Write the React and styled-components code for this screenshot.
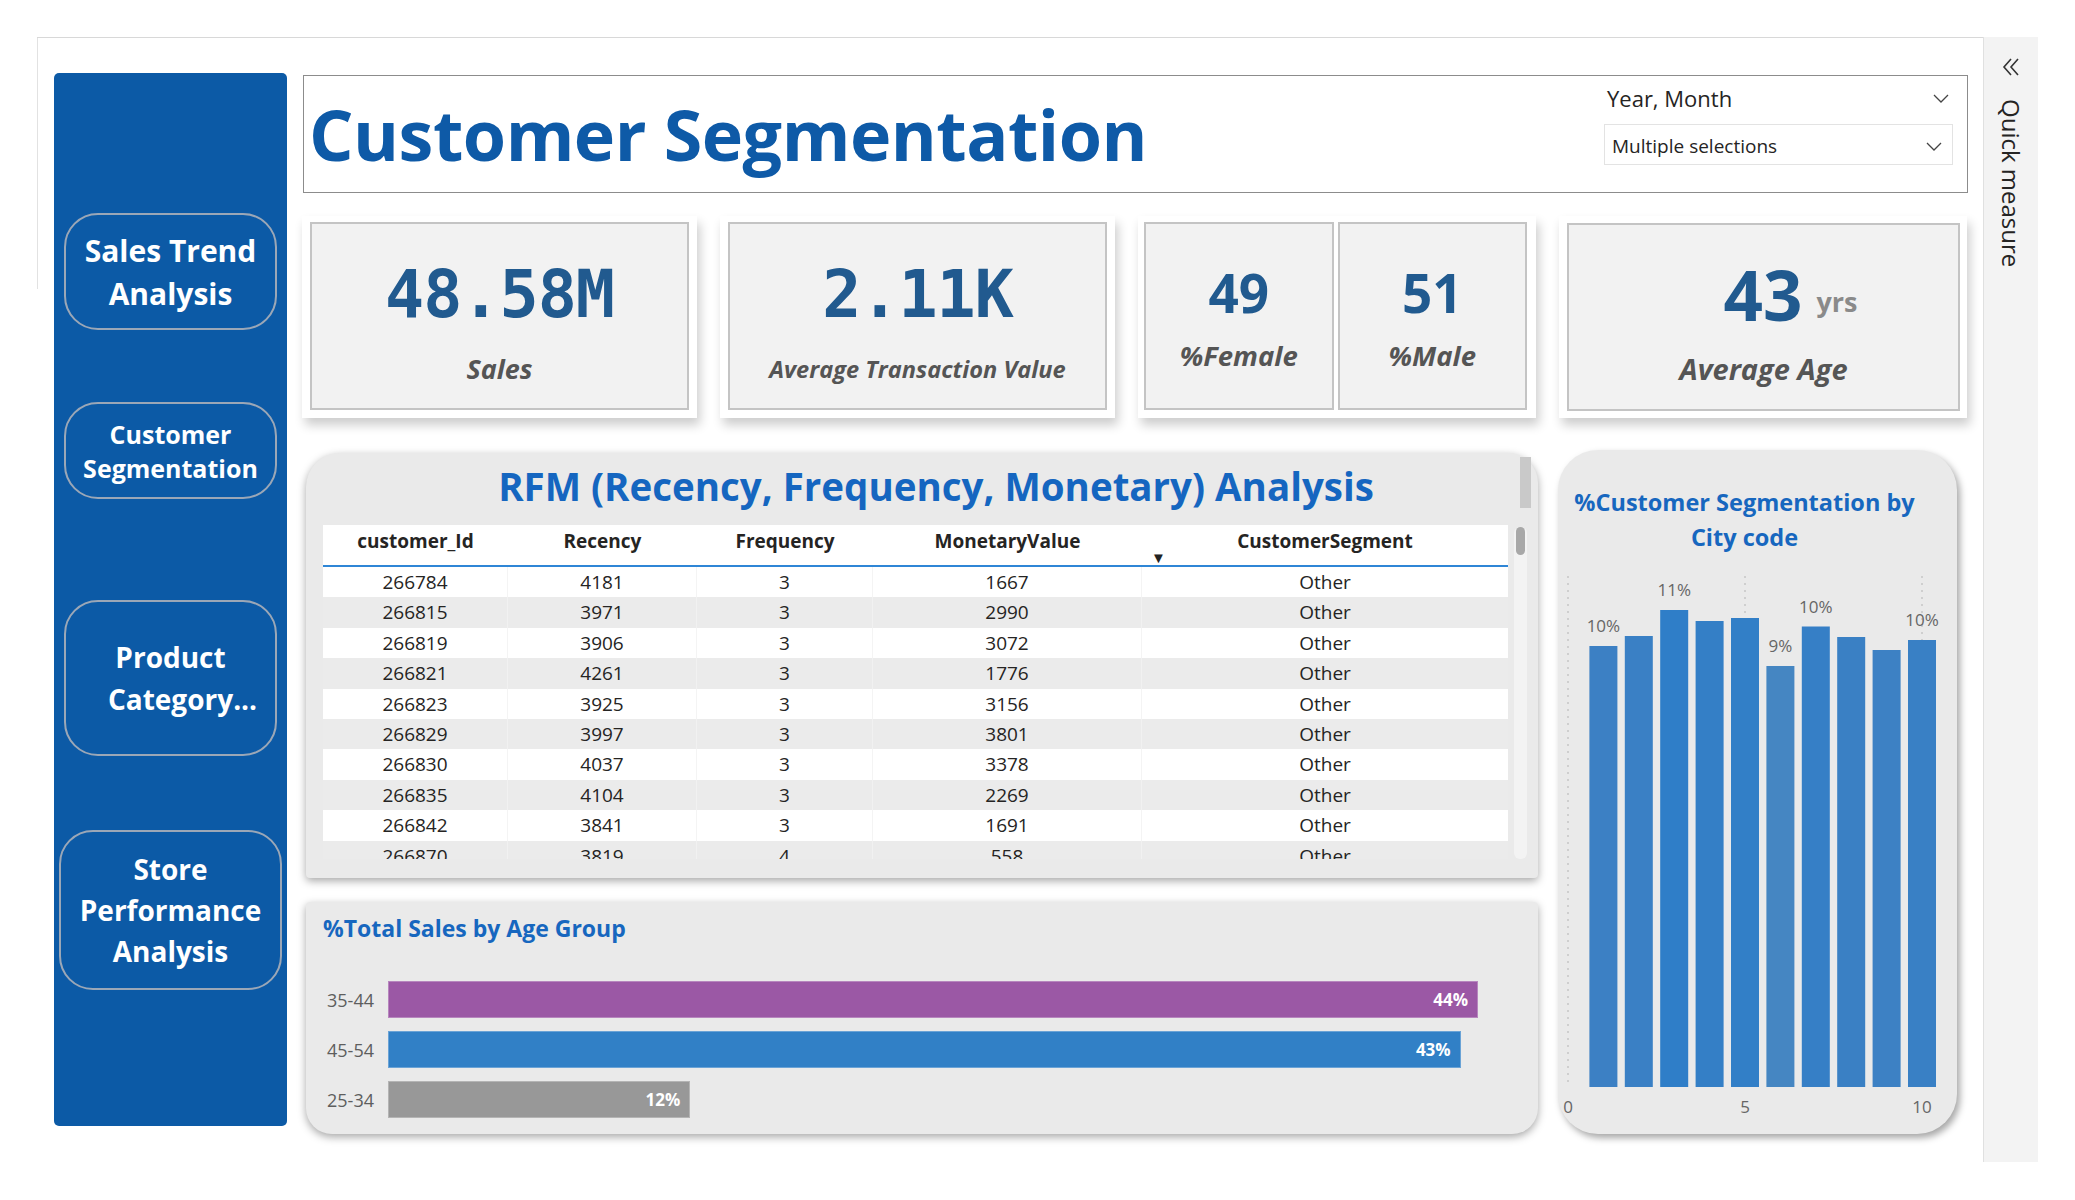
import React from 'react';
import styled, { createGlobalStyle } from 'styled-components';

const GlobalStyle = createGlobalStyle`
  html, body { margin: 0; padding: 0; background: #ffffff; }
  body { font-family: "Open Sans", "Noto Sans", "Liberation Sans", sans-serif; color: #252423; }
  * { box-sizing: border-box; }
`;

const Page = styled.div`
  width: 2075px;
  height: 1200px;
  display: flex;
  align-items: flex-start;
  padding: 37px 0 0 37px;
`;

const Canvas = styled.div`
  position: relative;
  width: 1946px;
  height: 1125px;
  flex: none;
  border-top: 1px solid #d8d8d8;
  display: flex;
  align-items: flex-start;
  padding: 35px 0 0 17px;
  &::before {
    content: '';
    position: absolute;
    left: 0;
    top: 0;
    width: 1px;
    height: 251px;
    background: #e2e2e2;
  }
`;

const Sidebar = styled.nav`
  width: 233px;
  height: 1053px;
  flex: none;
  background: #0c5aa6;
  border-radius: 5px;
  display: flex;
  flex-direction: column;
  align-items: center;
`;

const NavButton = styled.div`
  width: ${p => p.$w}px;
  height: ${p => p.$h}px;
  margin-top: ${p => p.$mt}px;
  border: 2px solid #9ba7b7;
  border-radius: 34px;
  display: flex;
  flex-direction: column;
  align-items: center;
  justify-content: center;
  color: #ffffff;
  font-weight: 700;
  font-size: ${p => p.$fs}px;
  line-height: ${p => p.$lh}px;
  text-align: center;
  white-space: nowrap;
`;

const NavLine = styled.span`
  display: block;
  padding-left: ${p => p.$shift || 0}px;
`;

const Main = styled.main`
  width: 1666px;
  margin-left: 15px;
  padding-top: 2px;
  display: flex;
  flex-direction: column;
`;

const TitleBox = styled.header`
  width: 1665px;
  height: 118px;
  margin-left: 1px;
  border: 1px solid #8c8c8c;
  background: #ffffff;
  display: flex;
  justify-content: space-between;
  align-items: flex-start;
`;

const PageTitle = styled.h1`
  margin: 0;
  padding: 18px 0 0 5px;
  font-size: 70px;
  line-height: 80px;
  font-weight: 700;
  color: #0e5aa7;
  letter-spacing: -0.5px;
`;

const Slicer = styled.div`
  width: 349px;
  margin: 7px 14px 0 0;
  display: flex;
  flex-direction: column;
`;

const SlicerHeader = styled.div`
  height: 30px;
  display: flex;
  align-items: center;
  justify-content: space-between;
  padding: 0 4px 0 3px;
  font-size: 22px;
  color: #252423;
`;

const SlicerBox = styled.div`
  margin-top: 11px;
  height: 41px;
  border: 1px solid #e3e3e3;
  display: flex;
  align-items: center;
  justify-content: space-between;
  padding: 3px 10px 0 7px;
  font-size: 19px;
  color: #252423;
`;

const KpiRow = styled.section`
  margin-top: 23px;
  height: 202px;
  display: flex;
  gap: 23px;
`;

const KpiOuter = styled.div`
  width: ${p => p.$w}px;
  height: 202px;
  flex: none;
  background: #ffffff;
  box-shadow: 3px 7px 10px rgba(0, 0, 0, 0.2);
  padding: ${p => p.$pad};
  display: flex;
  gap: 4px;
`;

const KpiCard = styled.div`
  flex: 1;
  height: 188px;
  background: #f2f2f2;
  border: 2px solid #c4c4c4;
  display: flex;
  flex-direction: column;
  align-items: center;
`;

const KpiValue = styled.div`
  margin-top: ${p => p.$mt}px;
  padding-left: ${p => p.$offset || 0}px;
  height: 80px;
  display: flex;
  align-items: center;
  justify-content: center;
  color: #215a8f;
  font-weight: 700;
  font-family: ${p => (p.$mono ? '"DejaVu Sans Mono", "Liberation Mono", monospace' : '"Open Sans", "Noto Sans", sans-serif')};
  font-size: ${p => p.$fs}px;
  line-height: 80px;
  letter-spacing: ${p => (p.$mono ? '-1px' : '0')};
`;

const Unit = styled.span`
  margin: 16px 0 0 14px;
  font-size: 27px;
  line-height: 40px;
  font-weight: 700;
  color: #8a8a8a;
  font-family: "Open Sans", sans-serif;
  letter-spacing: 0;
`;

const KpiLabel = styled.div`
  margin-top: ${p => p.$mt}px;
  font-size: ${p => p.$fs}px;
  line-height: 36px;
  font-weight: 700;
  font-style: italic;
  color: #555555;
  white-space: nowrap;
`;

const Lower = styled.section`
  margin-top: 32px;
  margin-left: 4px;
  display: flex;
  gap: 20px;
  align-items: flex-start;
`;

const LeftCol = styled.div`
  width: 1232px;
  padding-top: 3px;
  display: flex;
  flex-direction: column;
  gap: 24px;
`;

const RfmCard = styled.div`
  position: relative;
  height: 425px;
  background: #eaeaea;
  border-radius: 34px 30px 4px 4px;
  box-shadow: 0 3px 8px rgba(0, 0, 0, 0.35);
  display: flex;
  flex-direction: column;
`;

const RfmTitle = styled.h2`
  margin: 0;
  padding: 8px 0 0 28px;
  height: 72px;
  line-height: 50px;
  text-align: center;
  font-size: 38.5px;
  font-weight: 700;
  color: #1566c0;
  white-space: nowrap;
`;

const OuterScroll = styled.div`
  position: absolute;
  right: 7px;
  top: 4px;
  width: 11px;
  height: 51px;
  background: #c9c9c9;
`;

const TableWrap = styled.div`
  margin-left: 17px;
  display: flex;
  gap: 6px;
  height: 334px;
`;

const Table = styled.div`
  width: 1185px;
  height: 334px;
  overflow: hidden;
  display: flex;
  flex-direction: column;
`;

const HeadRow = styled.div`
  display: grid;
  grid-template-columns: 185px 189px 176px 269px 366px;
  height: 42px;
  flex: none;
  background: #ffffff;
  border-bottom: 2px solid #2f86d6;
`;

const HeadCell = styled.div`
  position: relative;
  padding-top: 3px;
  text-align: center;
  font-size: 19px;
  line-height: 26px;
  font-weight: 700;
  color: #252423;
`;

const SortArrow = styled.span`
  position: absolute;
  left: 9px;
  bottom: 1px;
  font-size: 15px;
  line-height: 14px;
  color: #222;
`;

const BodyRow = styled.div`
  display: grid;
  grid-template-columns: 185px 189px 176px 269px 366px;
  height: 30.4px;
  flex: none;
  background: ${p => (p.$alt ? '#ebebeb' : '#ffffff')};
`;

const Cell = styled.div`
  text-align: center;
  font-size: 19px;
  line-height: 31px;
  color: #252423;
  border-right: 1px solid ${p => (p.$alt ? '#f1f1f1' : '#f4f4f4')};
  &:last-child { border-right: none; }
`;

const ScrollTrack = styled.div`
  width: 13px;
  height: 332px;
  margin-top: 2px;
  background: #f3f3f3;
  border-radius: 6px;
  padding: 0 2px;
`;

const ScrollThumb = styled.div`
  width: 9px;
  height: 28px;
  background: #a8a8a8;
  border-radius: 5px;
`;

const AgeCard = styled.div`
  height: 232px;
  background: #eaeaea;
  border-radius: 4px 4px 26px 26px;
  box-shadow: 0 3px 8px rgba(0, 0, 0, 0.35);
  padding: 11px 0 0 17px;
  display: flex;
  flex-direction: column;
`;

const ChartTitle = styled.h3`
  margin: 0;
  font-size: ${p => p.$fs}px;
  line-height: ${p => p.$lh}px;
  font-weight: 700;
  color: #1767bf;
  text-align: ${p => p.$align || 'left'};
  padding: ${p => p.$pad || '0'};
  white-space: nowrap;
`;

const BarList = styled.div`
  margin-top: 38px;
  display: flex;
  flex-direction: column;
  gap: 13px;
`;

const BarRow = styled.div`
  display: flex;
  align-items: center;
  height: 37px;
`;

const BarLabel = styled.span`
  width: 65px;
  padding-right: 14px;
  text-align: right;
  font-size: 18px;
  color: #5e5e5e;
`;

const Bar = styled.div`
  height: 37px;
  background: ${p => p.$color};
  box-shadow: inset 0 0 0 1px rgba(255, 255, 255, 0.28);
  display: flex;
  align-items: center;
  justify-content: flex-end;
  padding-right: 10px;
  color: #ffffff;
  font-weight: 700;
  font-size: 17px;
`;

const CityCard = styled.div`
  width: 399px;
  height: 684px;
  flex: none;
  background: #eaeaea;
  border-radius: 40px;
  box-shadow: 3px 4px 7px rgba(0, 0, 0, 0.35);
  padding-top: 35px;
  display: flex;
  flex-direction: column;
`;

const ChartSvg = styled.svg`
  display: block;
  flex: none;
`;

const QuickPanel = styled.aside`
  width: 55px;
  height: 1125px;
  flex: none;
  background: #f3f3f3;
  border-left: 1px solid #e0e0e0;
  display: flex;
  flex-direction: column;
  align-items: center;
  padding-top: 20px;
`;

const QuickText = styled.div`
  margin-top: 22px;
  writing-mode: vertical-rl;
  font-size: 24px;
  line-height: 28px;
  color: #252423;
`;

const Chevron = () => (
  <svg width="16" height="9" viewBox="0 0 16 9">
    <polyline points="1,1 8,8 15,1" fill="none" stroke="#444" strokeWidth="1.3" />
  </svg>
);

const DoubleChevron = () => (
  <svg width="18" height="20" viewBox="0 0 18 20">
    <polyline points="9,2 2,10 9,18" fill="none" stroke="#333" strokeWidth="1.6" />
    <polyline points="16,2 9,10 16,18" fill="none" stroke="#333" strokeWidth="1.6" />
  </svg>
);

const rows = [
  [266784, 4181, 3, 1667, 'Other'],
  [266815, 3971, 3, 2990, 'Other'],
  [266819, 3906, 3, 3072, 'Other'],
  [266821, 4261, 3, 1776, 'Other'],
  [266823, 3925, 3, 3156, 'Other'],
  [266829, 3997, 3, 3801, 'Other'],
  [266830, 4037, 3, 3378, 'Other'],
  [266835, 4104, 3, 2269, 'Other'],
  [266842, 3841, 3, 1691, 'Other'],
  [266870, 3819, 4, 558, 'Other'],
];

const headers = ['customer_Id', 'Recency', 'Frequency', 'MonetaryValue', 'CustomerSegment'];

const ageGroups = [
  { label: '35-44', value: 44.0, text: '44%', color: '#9b58a5' },
  { label: '45-54', value: 43.3, text: '43%', color: '#3180c6' },
  { label: '25-34', value: 12.2, text: '12%', color: '#989898' },
];

const cityBars = [
  { top: 91, color: '#3c80c4', label: '10%' },
  { top: 81, color: '#3a80c5' },
  { top: 55, color: '#2f7ec8', label: '11%' },
  { top: 66, color: '#347fc6' },
  { top: 63, color: '#327fc7' },
  { top: 111, color: '#4586c2', label: '9%' },
  { top: 71.5, color: '#367fc6', label: '10%' },
  { top: 82, color: '#3a80c4' },
  { top: 95, color: '#3d81c4' },
  { top: 85, color: '#3980c5', label: '10%' },
];

const CityChart = () => {
  const base = 532;
  const x0 = 10;
  const unit = 35.4;
  return (
    <ChartSvg width="399" height="570" viewBox="0 0 399 570">
      {[0, 5, 10].map(t => (
        <line
          key={t}
          x1={x0 + unit * t}
          x2={x0 + unit * t}
          y1={21}
          y2={base}
          stroke="#c6c6c6"
          strokeWidth="1.5"
          strokeDasharray="2 5"
        />
      ))}
      {cityBars.map((b, i) => {
        const cx = x0 + unit * (i + 1);
        return (
          <g key={i}>
            <rect x={cx - 14} y={b.top} width={28} height={base - b.top} fill={b.color} />
            {b.label && (
              <text
                x={cx}
                y={b.top - 14}
                textAnchor="middle"
                fontSize="17"
                fill="#666"
                fontFamily='"Open Sans", sans-serif'
              >
                {b.label}
              </text>
            )}
          </g>
        );
      })}
      {[0, 5, 10].map(t => (
        <text
          key={t}
          x={x0 + unit * t}
          y={558}
          textAnchor="middle"
          fontSize="17"
          fill="#666"
          fontFamily='"Open Sans", sans-serif'
        >
          {t}
        </text>
      ))}
    </ChartSvg>
  );
};

export default function App() {
  const pxPerPct = 1090 / 44;
  return (
    <>
      <GlobalStyle />
      <Page>
        <Canvas>
          <Sidebar>
            <NavButton $w={213} $h={117} $mt={140} $fs={30} $lh={43}>
              <NavLine>Sales Trend</NavLine>
              <NavLine>Analysis</NavLine>
            </NavButton>
            <NavButton $w={213} $h={97} $mt={72} $fs={25} $lh={34}>
              <NavLine>Customer</NavLine>
              <NavLine>Segmentation</NavLine>
            </NavButton>
            <NavButton $w={213} $h={156} $mt={101} $fs={28} $lh={42}>
              <NavLine>Product</NavLine>
              <NavLine $shift={24}>Category...</NavLine>
            </NavButton>
            <NavButton $w={223} $h={160} $mt={74} $fs={28} $lh={41}>
              <NavLine>Store</NavLine>
              <NavLine>Performance</NavLine>
              <NavLine>Analysis</NavLine>
            </NavButton>
          </Sidebar>

          <Main>
            <TitleBox>
              <PageTitle>Customer Segmentation</PageTitle>
              <Slicer>
                <SlicerHeader>
                  <span>Year, Month</span>
                  <Chevron />
                </SlicerHeader>
                <SlicerBox>
                  <span>Multiple selections</span>
                  <Chevron />
                </SlicerBox>
              </Slicer>
            </TitleBox>

            <KpiRow>
              <KpiOuter $w={395} $pad="6px 8px 8px 8px">
                <KpiCard>
                  <KpiValue $mono $fs={65} $mt={31}>48.58M</KpiValue>
                  <KpiLabel $fs={27} $mt={16}>Sales</KpiLabel>
                </KpiCard>
              </KpiOuter>
              <KpiOuter $w={395} $pad="6px 8px 8px 8px">
                <KpiCard>
                  <KpiValue $mono $fs={65} $mt={31}>2.11K</KpiValue>
                  <KpiLabel $fs={23.6} $mt={16}>Average Transaction Value</KpiLabel>
                </KpiCard>
              </KpiOuter>
              <KpiOuter $w={398} $pad="6px 9px 8px 6px">
                <KpiCard>
                  <KpiValue $fs={53} $mt={29}>49</KpiValue>
                  <KpiLabel $fs={27.5} $mt={5}>%Female</KpiLabel>
                </KpiCard>
                <KpiCard>
                  <KpiValue $fs={53} $mt={29}>51</KpiValue>
                  <KpiLabel $fs={27.5} $mt={5}>%Male</KpiLabel>
                </KpiCard>
              </KpiOuter>
              <KpiOuter $w={408} $pad="7px 7px 8px 8px">
                <KpiCard>
                  <KpiValue $fs={69} $mt={29} $offset={54}>
                    43<Unit>yrs</Unit>
                  </KpiValue>
                  <KpiLabel $fs={29} $mt={17}>Average Age</KpiLabel>
                </KpiCard>
              </KpiOuter>
            </KpiRow>

            <Lower>
              <LeftCol>
                <RfmCard>
                  <OuterScroll />
                  <RfmTitle>RFM (Recency, Frequency, Monetary) Analysis</RfmTitle>
                  <TableWrap>
                    <Table>
                      <HeadRow>
                        {headers.map((h, i) => (
                          <HeadCell key={h}>
                            {h}
                            {i === 4 && <SortArrow>▼</SortArrow>}
                          </HeadCell>
                        ))}
                      </HeadRow>
                      {rows.map((r, i) => (
                        <BodyRow key={r[0]} $alt={i % 2 === 1}>
                          {r.map((c, j) => (
                            <Cell key={j} $alt={i % 2 === 1}>{c}</Cell>
                          ))}
                        </BodyRow>
                      ))}
                    </Table>
                    <ScrollTrack>
                      <ScrollThumb />
                    </ScrollTrack>
                  </TableWrap>
                </RfmCard>

                <AgeCard>
                  <ChartTitle $fs={23} $lh={30}>%Total Sales by Age Group</ChartTitle>
                  <BarList>
                    {ageGroups.map(g => (
                      <BarRow key={g.label}>
                        <BarLabel>{g.label}</BarLabel>
                        <Bar $color={g.color} style={{ width: `${g.value * pxPerPct}px` }}>
                          {g.text}
                        </Bar>
                      </BarRow>
                    ))}
                  </BarList>
                </AgeCard>
              </LeftCol>

              <CityCard>
                <ChartTitle $fs={23.5} $lh={35} $align="center" $pad="0 30px 0 4px">
                  %Customer Segmentation by
                  <br />
                  City code
                </ChartTitle>
                <CityChart />
              </CityCard>
            </Lower>
          </Main>
        </Canvas>

        <QuickPanel>
          <DoubleChevron />
          <QuickText>Quick measure</QuickText>
        </QuickPanel>
      </Page>
    </>
  );
}
